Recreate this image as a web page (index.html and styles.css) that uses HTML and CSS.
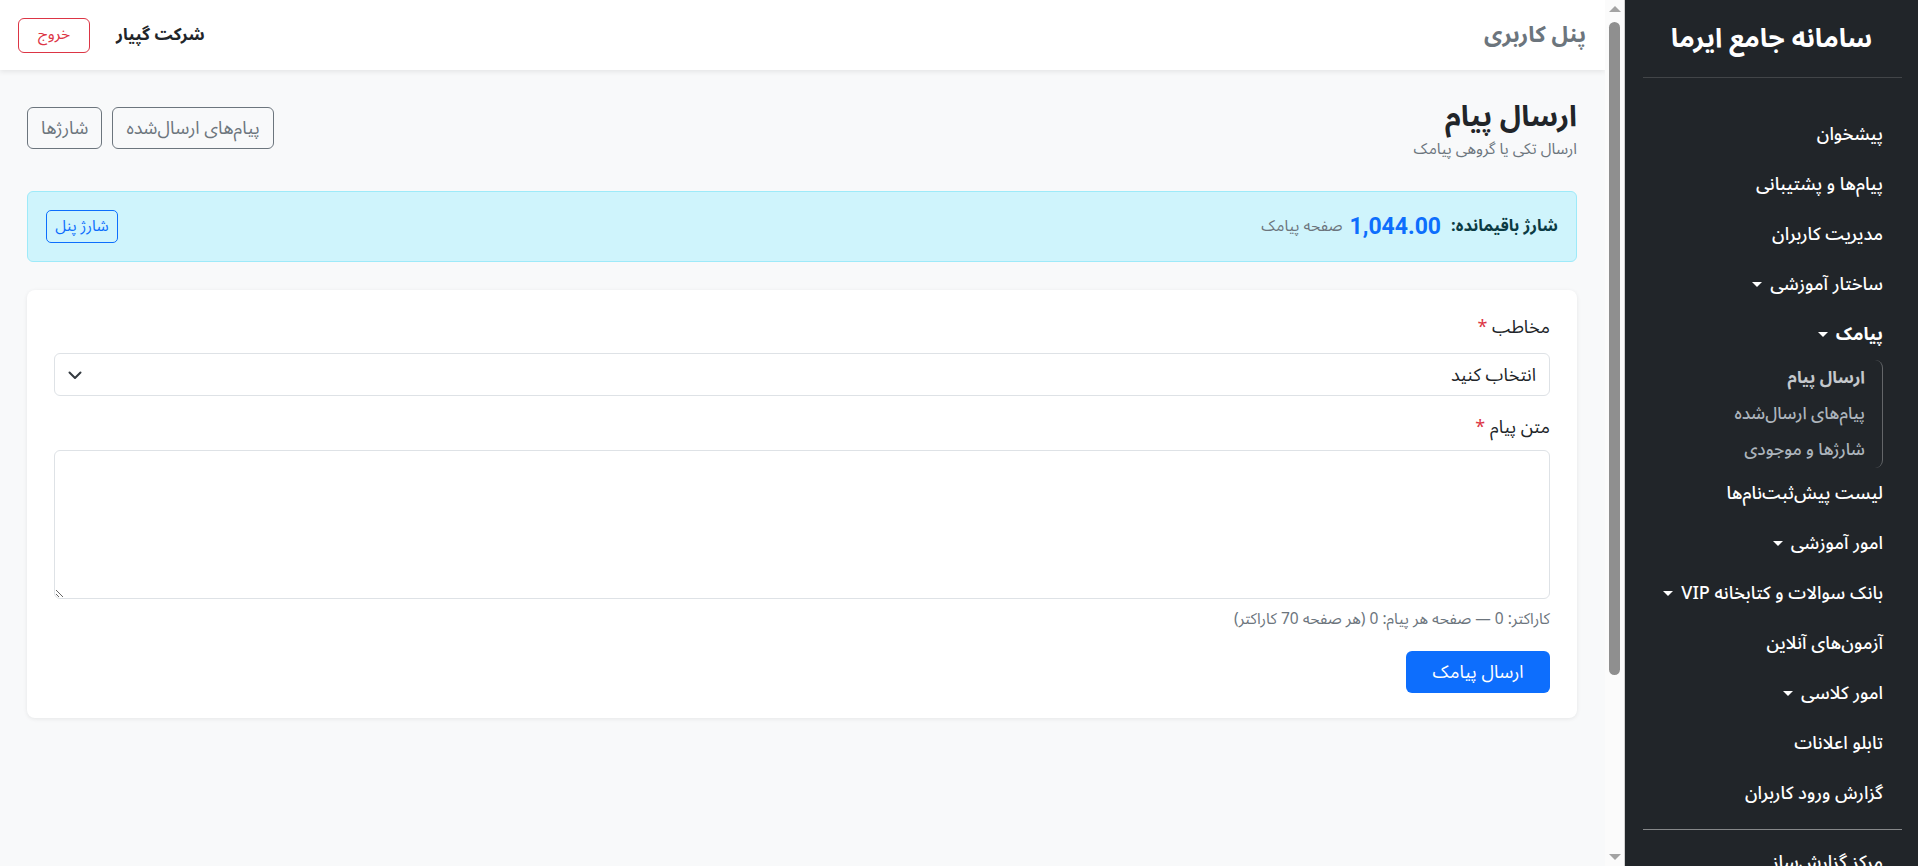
FILE: index.html
```html
<!DOCTYPE html>
<html lang="fa" dir="rtl">
<head>
<meta charset="utf-8">
<title>ارسال پیام</title>
<link rel="stylesheet" href="styles.css">
</head>
<body>
<div class="layout">
  <aside class="sidebar">
    <div class="brand">سامانه جامع ایرما</div>
    <div class="side-divider"></div>
    <nav class="menu">
      <a class="menu-item">پیشخوان</a>
      <a class="menu-item">پیام‌ها و پشتیبانی</a>
      <a class="menu-item">مدیریت کاربران</a>
      <a class="menu-item">ساختار آموزشی<span class="caret"></span></a>
      <a class="menu-item open">پیامک<span class="caret"></span></a>
      <div class="submenu">
        <a class="sub-item active">ارسال پیام</a>
        <a class="sub-item">پیام‌های ارسال‌شده</a>
        <a class="sub-item">شارژها و موجودی</a>
      </div>
      <a class="menu-item">لیست پیش‌ثبت‌نام‌ها</a>
      <a class="menu-item">امور آموزشی<span class="caret"></span></a>
      <a class="menu-item">بانک سوالات و کتابخانه VIP<span class="caret"></span></a>
      <a class="menu-item">آزمون‌های آنلاین</a>
      <a class="menu-item">امور کلاسی<span class="caret"></span></a>
      <a class="menu-item">تابلو اعلانات</a>
      <a class="menu-item">گزارش ورود کاربران</a>
      <div class="side-divider bottom"></div>
      <a class="menu-item last">مرکز گزارش‌ساز</a>
    </nav>
  </aside>

  <div class="scrollbar" aria-hidden="true">
    <span class="sb-arrow up"></span>
    <span class="sb-track"><span class="sb-thumb"></span></span>
    <span class="sb-arrow down"></span>
  </div>

  <div class="main">
    <header class="topbar">
      <div class="topbar-title">پنل کاربری</div>
      <div class="topbar-user">
        <span class="company">شرکت گپیار</span>
        <button class="btn btn-logout">خروج</button>
      </div>
    </header>

    <div class="content">
      <div class="page-head">
        <div class="page-titles">
          <h1 class="page-title">ارسال پیام</h1>
          <div class="page-sub">ارسال تکی یا گروهی پیامک</div>
        </div>
        <div class="head-actions">
          <button class="btn btn-secondary-outline">پیام‌های ارسال‌شده</button>
          <button class="btn btn-secondary-outline">شارژها</button>
        </div>
      </div>

      <div class="alert-info">
        <div class="balance">
          <span class="balance-label">شارژ باقیمانده:</span>
          <span class="balance-value">1,044.00</span>
          <span class="balance-unit">صفحه پیامک</span>
        </div>
        <button class="btn btn-primary-outline">شارژ پنل</button>
      </div>

      <div class="card">
        <label class="form-label">مخاطب <span class="req">*</span></label>
        <div class="select">
          <span>انتخاب کنید</span>
          <svg class="chev" width="16" height="16" viewBox="0 0 16 16"><path d="M2.5 5.5 8 11l5.5-5.5" fill="none" stroke="#343a40" stroke-width="2" stroke-linecap="round" stroke-linejoin="round"/></svg>
        </div>
        <label class="form-label second">متن پیام <span class="req">*</span></label>
        <textarea class="textarea"></textarea>
        <div class="help">کاراکتر: 0 — صفحه هر پیام: 0 (هر صفحه 70 کاراکتر)</div>
        <div class="actions">
          <button class="btn btn-primary">ارسال پیامک</button>
        </div>
      </div>
    </div>
  </div>
</div>
</body>
</html>
```
FILE: styles.css
```css
* { box-sizing: border-box; }
html, body { margin: 0; height: 100%; }
body {
  font-family: "Noto Sans Arabic", Roboto, "DejaVu Sans", sans-serif;
  font-size: 18px;
  color: #212529;
  overflow: hidden;
  background: #f8f9fa;
}
.layout { display: flex; height: 100vh; }

/* Sidebar */
.sidebar {
  width: 293px;
  flex: none;
  background: #212529;
  color: #fff;
  overflow: hidden;
}
.brand {
  height: 77px;
  display: flex;
  align-items: center;
  justify-content: center;
  font-size: 26.5px;
  font-weight: 700;
}
.side-divider {
  height: 1px;
  background: rgba(255,255,255,.15);
  margin: 0 16px 0 18px;
}
.side-divider.bottom { background: rgba(255,255,255,.45); margin-top: 11px; margin-bottom: 4px; }
.menu { padding-top: 31px; }
.menu-item {
  display: flex;
  align-items: center;
  height: 50px;
  padding-right: 35px;
  font-size: 18px;
  font-weight: 500;
  color: #fff;
}
.menu-item.last { align-items: flex-start; padding-top: 9px; }
.menu-item.open { font-weight: 700; }
.caret {
  width: 0; height: 0;
  border-top: 5px solid #fff;
  border-left: 5px solid transparent;
  border-right: 5px solid transparent;
  margin-right: 8px;
}
.submenu {
  margin: 1px 35px 0 0;
  padding-right: 17px;
  border-right: 1px solid rgba(255,255,255,.3);
  border-radius: 0 8px 8px 0;
}
.sub-item {
  display: flex;
  align-items: center;
  height: 36px;
  font-size: 17px;
  font-weight: 500;
  color: #adb5bd;
}
.sub-item.active { font-weight: 700; color: #c4c8cc; }

/* Fake scrollbar column */
.scrollbar {
  width: 20px;
  flex: none;
  display: flex;
  flex-direction: column;
  align-items: center;
  background: #fbfbfb;
  border-right: 1px solid #cfcfcf;
  direction: ltr;
}
.sb-arrow {
  width: 0; height: 0;
  border-left: 6px solid transparent;
  border-right: 6px solid transparent;
  margin: 6px 0;
}
.sb-arrow.up { border-bottom: 6px solid #a3a3a3; }
.sb-arrow.down { border-top: 6px solid #a3a3a3; }
.sb-track { flex: 1; width: 100%; display: flex; justify-content: center; padding-top: 4px; }
.sb-thumb {
  width: 11px;
  height: 653px;
  border-radius: 6px;
  background: #8f8f8f;
}

/* Main */
.main {
  flex: 1;
  min-width: 0;
  background: #f8f9fa;
  overflow: hidden;
}
.topbar {
  height: 70px;
  background: #fff;
  box-shadow: 0 2px 5px rgba(0,0,0,.08);
  display: flex;
  align-items: center;
  justify-content: space-between;
  padding: 0 19px 0 18px;
}
.topbar-title { font-size: 22.5px; font-weight: 700; color: #6c757d; }
.topbar-user { display: flex; align-items: center; gap: 26px; }
.company { font-size: 17px; font-weight: 700; color: #212529; }

.btn {
  font: inherit;
  border-radius: 6px;
  background: transparent;
  cursor: pointer;
  display: inline-flex;
  align-items: center;
  justify-content: center;
  line-height: 1;
}
.btn-logout {
  width: 72px; height: 35px;
  font-size: 15.5px;
  color: #dc3545;
  border: 1px solid #dc3545;
}
.content { padding: 25px 28px 0 27px; }
.page-head {
  display: flex;
  align-items: center;
  justify-content: space-between;
}
.page-title { margin: 0; font-size: 29px; font-weight: 700; line-height: 44px; }
.page-sub { font-size: 15.5px; color: #6c757d; line-height: 21px; }
.head-actions { display: flex; gap: 10px; }
.btn-secondary-outline {
  height: 42px;
  padding: 0 13px;
  font-size: 18px;
  color: #6c757d;
  border: 1px solid #6c757d;
}

.alert-info {
  margin-top: 31px;
  display: flex;
  align-items: center;
  justify-content: space-between;
  padding: 18px;
  background: #cff4fc;
  border: 1px solid #9eeaf9;
  border-radius: 6px;
}
.balance { display: flex; align-items: center; line-height: 1; height: 33px; }
.balance-label { font-weight: 700; color: #0b3b44; font-size: 16.5px; }
.balance-value {
  font-family: Roboto, sans-serif;
  font-size: 23px;
  font-weight: 700;
  color: #0d6efd;
  margin-right: 10px;
}
.balance-unit { font-size: 15.5px; color: #6c757d; margin-right: 7px; }
.btn-primary-outline {
  width: 72px; height: 33px;
  font-size: 15.5px;
  color: #0d6efd;
  border: 1px solid #0d6efd;
  border-radius: 5px;
}

.card {
  margin-top: 28px;
  background: #fff;
  border-radius: 8px;
  box-shadow: 0 1px 4px rgba(0,0,0,.08);
  padding: 25px 27px;
}
.form-label { display: block; line-height: 24px; margin-bottom: 14px; font-size: 18px; }
.form-label.second { margin-bottom: 11px; }
.req { color: #dc3545; }
.select {
  height: 43px;
  border: 1px solid #dee2e6;
  border-radius: 6px;
  display: flex;
  align-items: center;
  justify-content: space-between;
  padding: 0 13px 0 12px;
  margin-bottom: 19px;
  font-size: 18px;
}
.chev { display: block; }
.textarea {
  display: block;
  width: 100%;
  height: 149px;
  border: 1px solid #dee2e6;
  border-radius: 6px;
  resize: vertical;
  font: inherit;
  margin: 0 0 10px;
}
.help { font-size: 15.5px; line-height: 21px; color: #6c757d; }
.actions { display: flex; margin-top: 21px; }
.btn-primary {
  width: 144px; height: 42px;
  border: none;
  background: #0d6efd;
  color: #fff;
  font-size: 18px;
}
```
